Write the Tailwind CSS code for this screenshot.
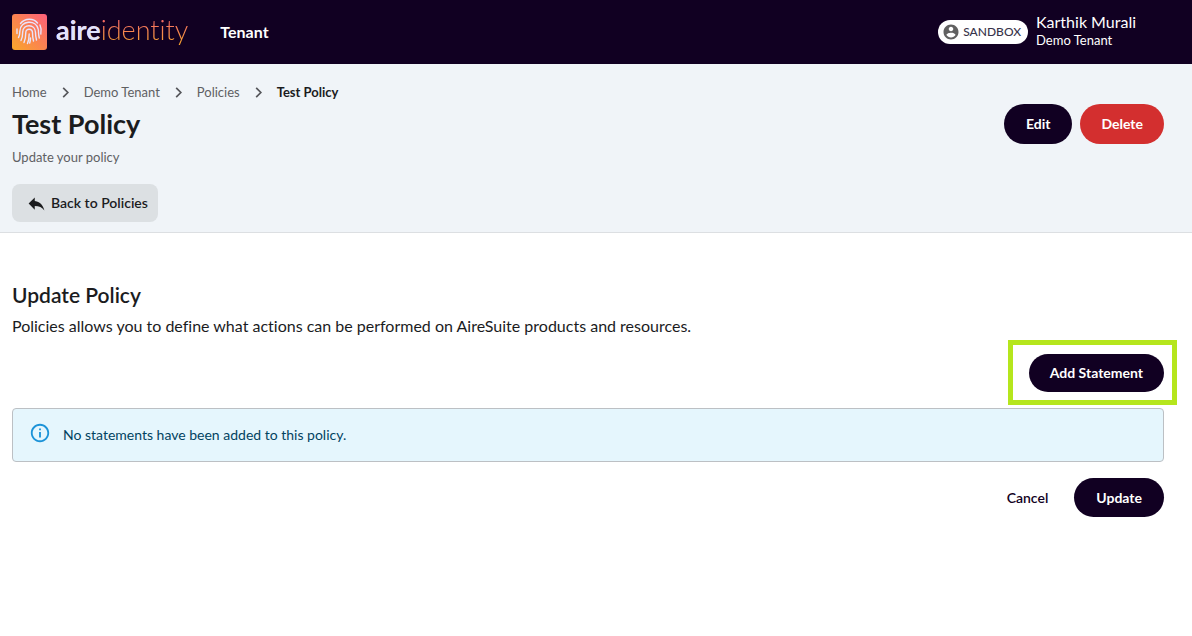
<!DOCTYPE html>
<html lang="en">
<head>
<meta charset="utf-8">
<meta name="viewport" content="width=device-width, initial-scale=1">
<title>Test Policy</title>
<script src="https://cdn.jsdelivr.net/npm/@tailwindcss/browser@4"></script>
</head>
<body class="min-h-screen bg-white font-['Lato',sans-serif] text-[#1b1c1e] [font-variant-ligatures:no-common-ligatures]">
<header class="flex h-16 items-center bg-[#110022] pr-14 pl-3 text-white">
  <a href="#" class="flex items-center gap-2" aria-label="aireidentity">
    <svg class="size-9" viewBox="0 0 36 36" fill="none" aria-hidden="true">
      <defs><linearGradient id="g" x1="0" y1="1" x2="1" y2="0"><stop offset="0" stop-color="#f9a72b"/><stop offset=".5" stop-color="#fb8350"/><stop offset="1" stop-color="#fd5f7c"/></linearGradient></defs>
      <rect width="35" height="36" rx="3" fill="url(#g)"/>
      <g stroke="#e9e4fb" stroke-width="1.4" stroke-linecap="round">
        <path d="M8.500 9.500C13 4 21.500 4 25.500 9"/>
        <path d="M5 19.500v-4.500"/>
        <path d="M6.500 23.500c1-1.500 1.300-3.500 1.300-6 0-11.500 17-12.500 18.500-2 .4 3 0 5 1 8.500"/>
        <path d="M28 11c1.300 2.800 1.500 6 .8 9"/>
        <path d="M9 26.500c1.500-3 1.700-5.500 1.700-8.500 0-8.500 12.800-8.500 12.800.5 0 3 .3 5 1 7.500"/>
        <path d="M12 28.500c1.500-3.500 1.800-6.500 1.800-10 0-4.500 6.700-4.500 6.700.5 0 3 .3 5.500 1 8"/>
        <path d="M15.500 29.500c1.200-2.700 1.600-5.500 1.700-9.500M18.500 24c0 2-.3 3.500-.8 5"/>
      </g>
    </svg>
    <span class="bg-linear-to-t from-[#f7a02f] from-20% to-[#f5566c] bg-clip-text pb-1 text-[27px] leading-8 font-light text-transparent"><span class="font-bold text-[#dfe3ff]">aire</span>identity</span>
  </a>
  <a href="#" class="ml-8 text-base font-bold">Tenant</a>
  <div class="ml-auto flex items-center gap-2">
    <span class="flex h-6 items-center gap-[3px] rounded-full bg-white pr-[7px] pl-1 text-xs font-medium text-[#38344a]">
      <svg class="size-[18px]" viewBox="0 0 24 24" fill="#616161" aria-hidden="true"><path d="M12 2C6.480 2 2 6.480 2 12s4.480 10 10 10 10-4.480 10-10S17.520 2 12 2zm0 3c1.660 0 3 1.340 3 3s-1.340 3-3 3-3-1.340-3-3 1.340-3 3-3zm0 14.200c-2.500 0-4.710-1.280-6-3.220.03-1.990 4-3.080 6-3.080 1.990 0 5.970 1.090 6 3.080-1.290 1.940-3.500 3.220-6 3.220z"/></svg>
      SANDBOX
    </span>
    <div class="pb-1">
      <p class="text-base leading-5">Karthik Murali</p>
      <p class="text-[13px] leading-4">Demo Tenant</p>
    </div>
  </div>
</header>

<section class="flex items-start justify-between border-b border-[#dcdfe2] bg-[#f0f4f8] pt-[18px] pr-7 pb-[10px] pl-3">
  <div>
    <nav aria-label="Breadcrumb">
      <ol class="flex items-center gap-3 text-[13px] leading-5 text-[#5f6063]">
        <li><a href="#">Home</a></li>
        <li aria-hidden="true"><svg class="size-[13px]" viewBox="0 0 13 14" fill="none" stroke="#55565a" stroke-width="1.800"><path d="M4 2l5 5-5 5"/></svg></li>
        <li><a href="#">Demo Tenant</a></li>
        <li aria-hidden="true"><svg class="size-[13px]" viewBox="0 0 13 14" fill="none" stroke="#55565a" stroke-width="1.800"><path d="M4 2l5 5-5 5"/></svg></li>
        <li><a href="#">Policies</a></li>
        <li aria-hidden="true"><svg class="size-[13px]" viewBox="0 0 13 14" fill="none" stroke="#55565a" stroke-width="1.800"><path d="M4 2l5 5-5 5"/></svg></li>
        <li><a href="#" aria-current="page" class="font-bold text-[#1b1c1e]">Test Policy</a></li>
      </ol>
    </nav>
    <h1 class="mt-1 text-[27px] leading-9 font-bold">Test Policy</h1>
    <p class="mt-[5px] text-[13px] leading-5 text-[#5f6063]">Update your policy</p>
    <a href="#" class="mt-[17px] inline-flex h-[38px] items-center gap-1 rounded-lg bg-[#dce0e3] pr-[10px] pl-[14px] text-sm font-semibold">
      <svg class="size-[21px]" viewBox="0 0 24 24" fill="#1b1c1e" aria-hidden="true"><path d="M10 9V5l-7 7 7 7v-4.100c5 0 8.500 1.600 11 5.100-1-5-4-10-11-11z"/></svg>
      Back to Policies
    </a>
  </div>
  <div class="mt-[22px] flex gap-2">
    <button type="button" class="h-10 rounded-full bg-[#110022] px-[22px] text-sm font-bold text-white">Edit</button>
    <button type="button" class="h-10 rounded-full bg-[#d32f2f] px-[21px] text-sm font-bold text-white">Delete</button>
  </div>
</section>

<main class="pt-12 pr-7 pl-3">
  <h2 class="text-[21px] leading-7 font-semibold">Update Policy</h2>
  <p class="mt-[3px] text-base leading-7">Policies allows you to define what actions can be performed on AireSuite products and resources.</p>
  <div class="-mr-[13px] flex justify-end">
    <div class="border-[5px] border-[#b5e61d] pt-[9px] pr-2 pb-2 pl-4">
      <button type="button" class="block h-[38px] rounded-full bg-[#110022] px-[21px] text-sm font-bold text-white">Add Statement</button>
    </div>
  </div>
  <div role="status" class="mt-[3px] flex h-[54px] items-center gap-3 rounded border border-[#bcc0c4] bg-[#e5f6fd] px-4 text-sm text-[#014361]">
    <svg class="mb-1 size-[22px]" viewBox="0 0 24 24" fill="#1c93d8" aria-hidden="true"><path d="M11 7h2v2h-2zm0 4h2v6h-2zm1-9C6.480 2 2 6.480 2 12s4.480 10 10 10 10-4.480 10-10S17.520 2 12 2zm0 18c-4.410 0-8-3.590-8-8s3.590-8 8-8 8 3.590 8 8-3.590 8-8 8z"/></svg>
    <p>No statements have been added to this policy.</p>
  </div>
  <div class="mt-4 flex items-center justify-end gap-1">
    <button type="button" class="h-[39px] rounded-full px-[22px] text-sm font-semibold text-[#110022]">Cancel</button>
    <button type="button" class="h-[39px] rounded-full bg-[#110022] px-[22px] text-sm font-bold text-white">Update</button>
  </div>
</main>
</body>
</html>
